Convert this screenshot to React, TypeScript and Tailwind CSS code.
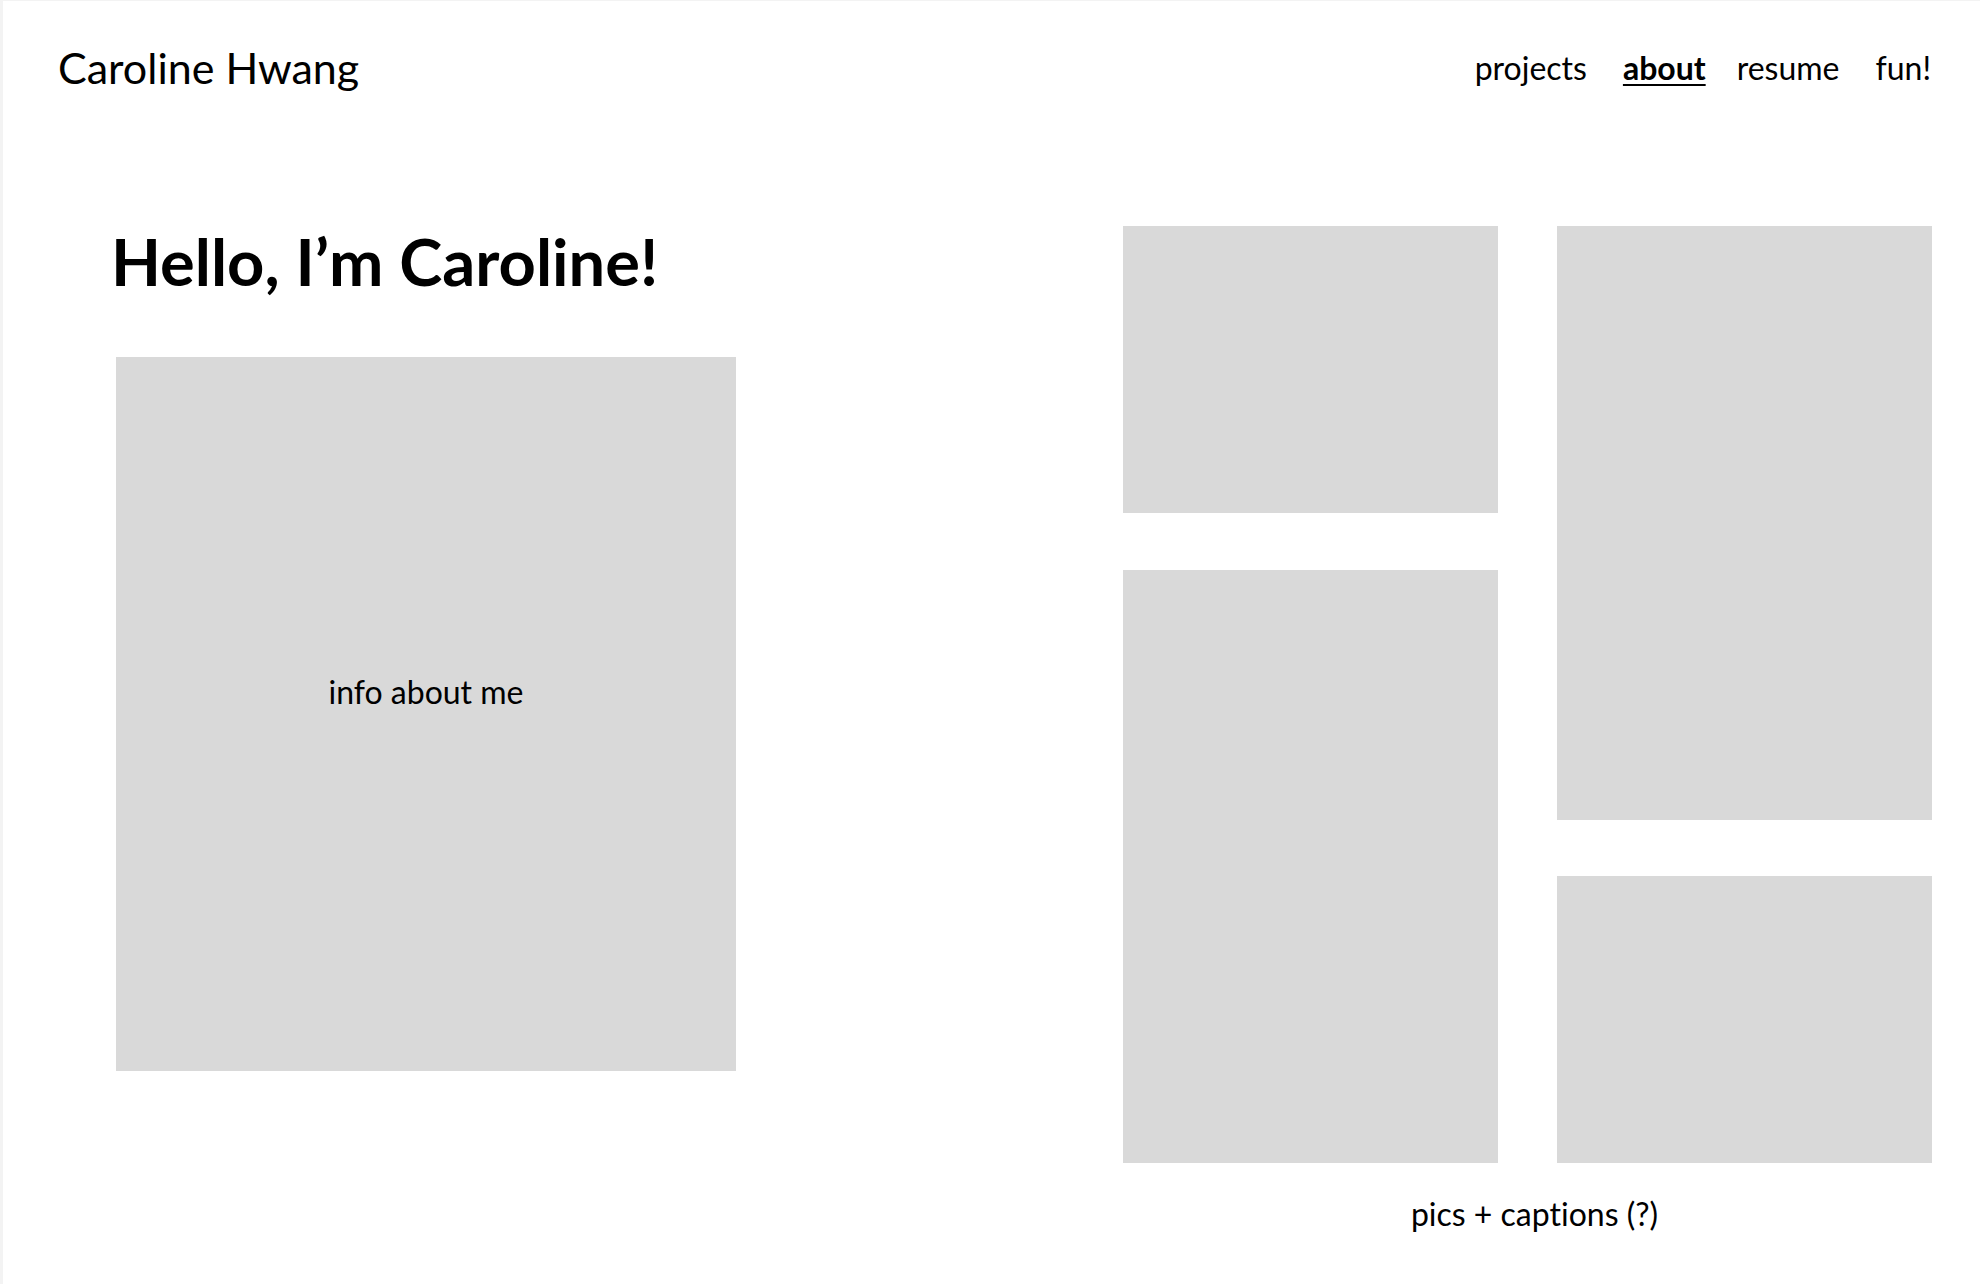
import React from "react";

export default function App() {
  return (
    <div
      className="w-[1980px] min-h-[1284px] bg-white text-black border-l-[3px] border-t border-[#f3f3f3] [font-variant-ligatures:none]"
      style={{ fontFamily: "Lato, 'Noto Sans', sans-serif" }}
    >
      <header className="flex items-center justify-between h-[133px] pl-[55px] pr-[49px]">
        <div className="text-[43px] leading-none font-normal">Caroline Hwang</div>
        <nav className="flex items-center text-[32px] leading-none">
          <a className="font-normal">projects</a>
          <a className="ml-[36px] font-bold underline decoration-[2px] underline-offset-[4px]">about</a>
          <a className="ml-[31px] font-normal">resume</a>
          <a className="ml-[36px] font-normal">fun!</a>
        </nav>
      </header>

      <main className="flex items-start justify-between pr-[48px] pt-[92px]">
        <section className="pl-[108px] flex flex-col">
          <h1 className="mt-[3px] text-[65px] leading-[65px] font-bold">Hello, I’m Caroline!</h1>
          <div className="mt-[63px] ml-[5px] w-[620px] h-[714px] bg-[#d9d9d9] flex items-center justify-center pb-[44px]">
            <span className="text-[32px] leading-none">info about me</span>
          </div>
        </section>

        <section className="w-[809px] flex flex-col">
          <div className="grid grid-cols-[375px_375px] gap-x-[59px]">
            <div className="flex flex-col gap-[57px]">
              <div className="h-[287px] bg-[#d9d9d9]" />
              <div className="h-[593px] bg-[#d9d9d9]" />
            </div>
            <div className="flex flex-col gap-[56px]">
              <div className="h-[594px] bg-[#d9d9d9]" />
              <div className="h-[287px] bg-[#d9d9d9]" />
            </div>
          </div>
          <div className="mt-[35px] pl-[14px] text-center text-[32px] leading-none">pics + captions (?)</div>
        </section>
      </main>
    </div>
  );
}
